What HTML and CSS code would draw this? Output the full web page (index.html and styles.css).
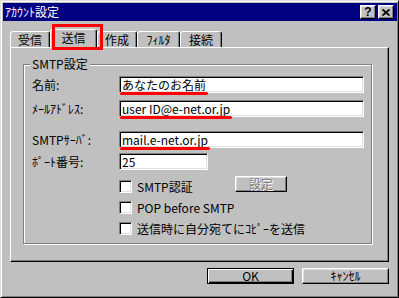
FILE: index.html
```html
<!DOCTYPE html>
<html lang="ja">
<head>
  <meta charset="UTF-8">
  <meta name="viewport" content="width=device-width, initial-scale=1.0">
  <title>ｱｶｳﾝﾄ設定</title>
  <link rel="stylesheet" href="styles.css">
</head>
<body>
  <div class="window">
    <div class="titlebar">
      <span class="title">ｱｶｳﾝﾄ設定</span>
      <div class="caption-btns">
        <span class="cap-btn help">?</span>
        <span class="cap-btn close">
          <svg width="8" height="7" viewBox="0 0 8 7">
            <path d="M0.5 0.5 L7.5 6.5 M7.5 0.5 L0.5 6.5" stroke="#000" stroke-width="1.7" fill="none" />
          </svg>
        </span>
      </div>
    </div>

    <div class="dialog">
      <div class="tabs">
        <div class="tab t-recv">受信</div>
        <div class="tab t-send active">送信</div>
        <div class="tab t-make">作成</div>
        <div class="tab t-filter">ﾌｨﾙﾀ</div>
        <div class="tab t-conn">接続</div>
      </div>

      <div class="panel">
        <div class="group">
          <span class="legend">SMTP設定</span>

          <div class="row r-name">
            <span class="label">名前:</span>
            <div class="field wide"><span class="mark">あなたのお名前</span></div>
          </div>
          <div class="row r-mail">
            <span class="label">ﾒｰﾙｱﾄﾞﾚｽ:</span>
            <div class="field wide"><span class="mark">user ID@e-net.or.jp</span></div>
          </div>
          <div class="row r-server">
            <span class="label">SMTPｻｰﾊﾞ:</span>
            <div class="field wide"><span class="mark">mail.e-net.or.jp</span></div>
          </div>
          <div class="row r-port">
            <span class="label">ﾎﾟｰﾄ番号:</span>
            <div class="field port">25</div>
          </div>

          <div class="checks">
            <div class="check-row">
              <span class="box"></span>
              <span class="check-label auth">SMTP認証</span>
              <span class="btn small disabled">設定</span>
            </div>
            <div class="check-row">
              <span class="box"></span>
              <span class="check-label">POP before SMTP</span>
            </div>
            <div class="check-row">
              <span class="box"></span>
              <span class="check-label">送信時に自分宛てにｺﾋﾟｰを送信</span>
            </div>
          </div>
        </div>
      </div>

      <div class="actions">
        <div class="btn wide-btn default">OK</div>
        <div class="btn wide-btn">ｷｬﾝｾﾙ</div>
      </div>
    </div>
  </div>
</body>
</html>
```

FILE: styles.css
```css
* {
  margin: 0;
  padding: 0;
  box-sizing: border-box;
}
:root {
  --face: #c0c0c0;
  --shadow: #808080;
  --light: #dfdfdf;
  --mark: #ff0000;
}

html,
body {
  width: 399px;
  height: 298px;
  overflow: hidden;
}

body {
  background-color: var(--face);
  color: #000;
  font-family: "Noto Sans CJK JP", "DejaVu Sans", sans-serif;
  font-size: 12px;
  line-height: 14px;
}

.window {
  display: flex;
  flex-direction: column;
  width: 399px;
  height: 298px;
  padding: 2px 1px 2px 2px;
  border: 1px solid;
  border-color: var(--light) #000 #000 var(--light);
  box-shadow: inset 1px 1px #fff, inset -1px -1px var(--shadow);
}

/* title bar */
.titlebar {
  display: flex;
  justify-content: space-between;
  align-items: center;
  height: 18px;
  padding: 0 3px 0 2px;
  background-color: #000080;
  color: #fff;
}
.caption-btns {
  display: flex;
  gap: 2px;
}
.cap-btn {
  display: flex;
  justify-content: center;
  align-items: center;
  width: 16px;
  height: 14px;
  background-color: var(--face);
  color: #000;
  border: 1px solid;
  border-color: #fff #000 #000 #fff;
  box-shadow: inset -1px -1px var(--shadow), inset 1px 1px var(--light);
}
.cap-btn.help {
  font-family: "Liberation Sans", sans-serif;
  font-size: 12px;
  font-weight: 700;
  line-height: 12px;
}

/* dialog body */
.dialog {
  display: flex;
  flex-direction: column;
  padding: 8px 8px 0 7px;
}

.tabs {
  position: relative;
  z-index: 1;
  display: flex;
  align-items: flex-end;
  height: 18px;
}
.tab {
  display: flex;
  justify-content: center;
  align-items: center;
  height: 16px;
  border: 1px solid;
  border-bottom: 0;
  border-color: #fff #000 transparent #fff;
  border-radius: 3px 3px 0 0;
  box-shadow: inset -1px 0 var(--shadow);
  background-color: var(--face);
}
.t-recv { width: 40px; }
.t-send { width: 47px; }
.t-make { width: 40px; }
.t-filter { width: 43px; }
.t-conn { width: 42px; }

.tab.active {
  position: relative;
  height: 19px;
  margin-bottom: -1px;
  padding-bottom: 2px;
}
.tab.active::after {
  content: "";
  position: absolute;
  top: -6px;
  left: 1px;
  width: 45px;
  height: 20px;
  border: 3px solid var(--mark);
}

.panel {
  width: 379px;
  height: 215px;
  padding: 16px 0 0 12px;
  border: 1px solid;
  border-color: #fff #000 #000 #fff;
  box-shadow: inset -1px -1px var(--shadow);
}

.group {
  position: relative;
  width: 349px;
  height: 180px;
  padding: 11px 0 0 8px;
  border: 1px solid var(--shadow);
  box-shadow: inset 1px 1px #fff, 1px 1px #fff;
}
.legend {
  position: absolute;
  top: -8px;
  left: 6px;
  padding: 0 2px;
  background-color: var(--face);
}

.row {
  display: flex;
  align-items: center;
  height: 17px;
}
.r-mail { margin-top: 7px; }
.r-server { margin-top: 14px; }
.r-port { margin-top: 5px; }

.label {
  width: 87px;
  flex-shrink: 0;
}

.field {
  display: flex;
  align-items: center;
  height: 17px;
  padding-left: 2px;
  background-color: #fff;
  border: 1px solid;
  border-color: var(--shadow) #fff #fff var(--shadow);
  box-shadow: inset 1px 1px #000, inset -1px -1px var(--light);
  white-space: nowrap;
}
.field.wide { width: 245px; }
.field.port { width: 89px; }

.mark {
  position: relative;
  display: inline-block;
  height: 14px;
}
.mark::after {
  content: "";
  position: absolute;
  left: -2px;
  right: -2px;
  bottom: -3px;
  height: 3px;
  border-radius: 2px;
  background-color: var(--mark);
}

.checks {
  margin-top: 10px;
  padding-left: 87px;
}
.check-row {
  display: flex;
  align-items: center;
  height: 13px;
  margin-bottom: 8px;
}
.box {
  flex-shrink: 0;
  width: 13px;
  height: 13px;
  background-color: #fff;
  border: 1px solid;
  border-color: var(--shadow) #fff #fff var(--shadow);
  box-shadow: inset 1px 1px #000, inset -1px -1px var(--light);
}
.check-label {
  margin-left: 5px;
  white-space: nowrap;
}
.check-label.auth {
  width: 98px;
}

/* buttons */
.btn {
  display: flex;
  justify-content: center;
  align-items: center;
  background-color: var(--face);
  border: 1px solid;
  border-color: #fff #000 #000 #fff;
  box-shadow: inset -1px -1px var(--shadow), inset 1px 1px var(--light);
}
.btn.small {
  align-self: flex-start;
  width: 52px;
  height: 16px;
  margin-top: -4px;
}
.btn.disabled {
  color: var(--shadow);
  text-shadow: 1px 1px #fff;
}

.actions {
  display: flex;
  justify-content: flex-end;
  gap: 8px;
  margin-top: 6px;
}
.wide-btn {
  width: 87px;
  height: 16px;
}
.btn.default {
  border-color: #000;
  box-shadow: inset 1px 1px #fff, inset -1px -1px #000, inset -2px -2px var(--shadow);
}
```
